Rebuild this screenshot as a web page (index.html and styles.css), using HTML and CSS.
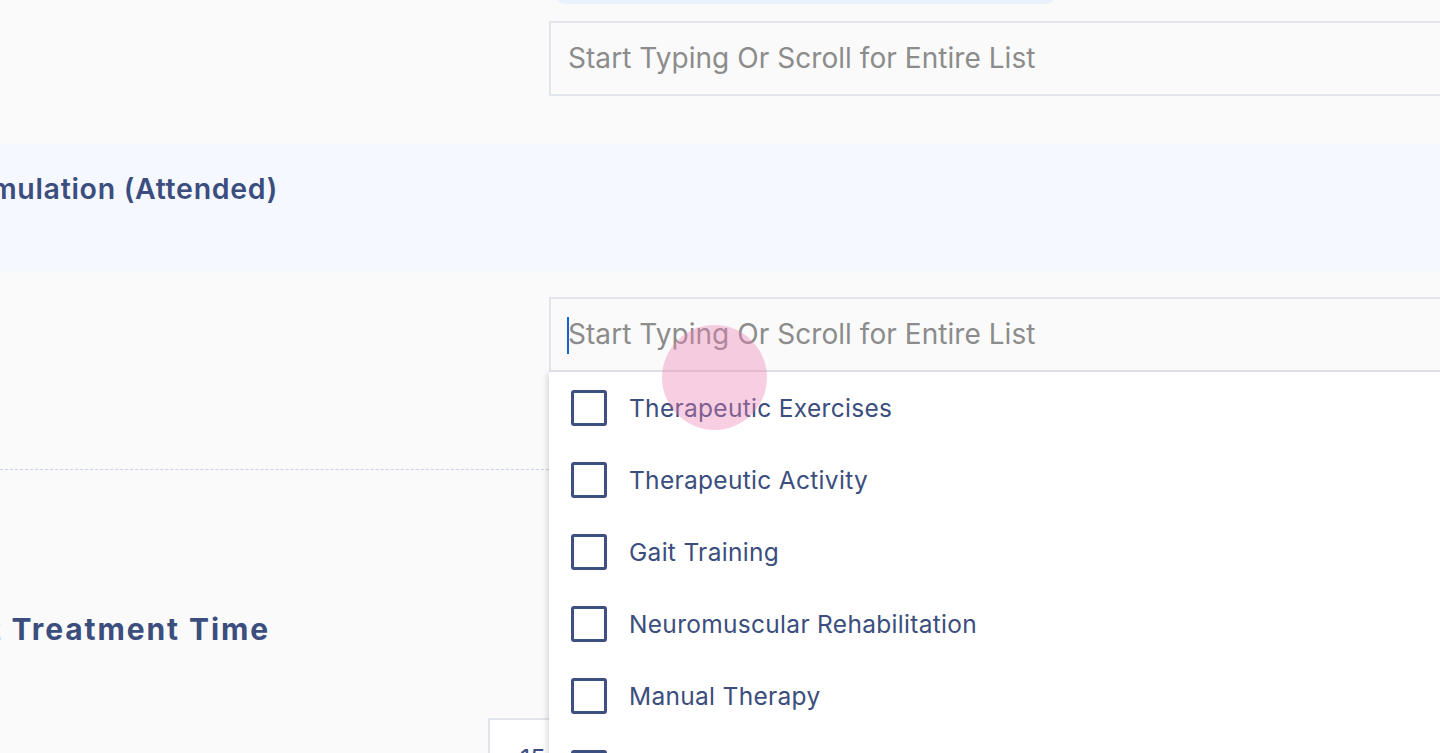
FILE: index.html
```html
<!DOCTYPE html>
<html>
<head>
<meta charset="utf-8">
<link rel="stylesheet" href="styles.css">
</head>
<body>
<div class="page">
  <div class="pill-row"><div class="pill"></div></div>
  <div class="field-row">
    <div class="field"><span class="placeholder">Start Typing Or Scroll for Entire List</span></div>
  </div>
  <div class="band">
    <div class="clip-title"><span class="title">Electrical Stimulation (Attended)</span></div>
  </div>
  <div class="field-row second">
    <div class="field"><span class="caret"></span><span class="placeholder">Start Typing Or Scroll for Entire List</span></div>
  </div>
  <div class="divider-row"><div class="divider"></div></div>
  <div class="treat-row">
    <div class="clip-title treat"><span class="title bold">Total Direct Treatment Time</span></div>
  </div>
  <div class="box-row"><div class="small-box"><span class="box-text">15</span></div></div>

  <div class="dropdown">
    <div class="item"><span class="cb"></span><span class="label">Therapeutic Exercises</span></div>
    <div class="item"><span class="cb"></span><span class="label">Therapeutic Activity</span></div>
    <div class="item"><span class="cb"></span><span class="label">Gait Training</span></div>
    <div class="item"><span class="cb"></span><span class="label">Neuromuscular Rehabilitation</span></div>
    <div class="item"><span class="cb"></span><span class="label">Manual Therapy</span></div>
    <div class="item"><span class="cb"></span><span class="label">Massage</span></div>
  </div>
  <div class="touch"></div>
</div>
</body>
</html>
```
FILE: styles.css
```css
html, body {
  margin: 0;
  padding: 0;
  background: #fafafa;
  overflow: hidden;
  width: 1440px;
  height: 753px;
}
.page {
  position: relative;
  width: 1440px;
  height: 753px;
  overflow: hidden;
  display: flex;
  flex-direction: column;
  font-family: "Inter", "Open Sans", sans-serif;
  color: #3b4e7e;
}
.pill-row {
  height: 21px;
  flex: none;
}
.pill {
  margin-left: 552px;
  margin-top: -26px;
  width: 507px;
  height: 30px;
  background: #ebf0fd;
  border-radius: 15px;
}
.field-row {
  flex: none;
  padding-left: 549px;
  height: 75px;
}
.field-row.second {
  margin-top: 26px;
}
.field {
  box-sizing: border-box;
  width: 1000px;
  height: 75px;
  border: 2px solid #e1e4ea;
  border-right: none;
  background: #fafafa;
  display: flex;
  align-items: center;
  padding-left: 17px;
  position: relative;
}
.placeholder {
  font-size: 28px;
  color: #8c8c8c;
  letter-spacing: 0.05px;
  white-space: nowrap;
  margin-top: -2px;
}
.caret {
  position: absolute;
  left: 16px;
  top: 18px;
  width: 2px;
  height: 37px;
  background: #1a5fd0;
}
.band {
  flex: none;
  margin-top: 48px;
  height: 127px;
  background: #f5f8fe;
  display: flex;
  align-items: center;
}
.clip-title {
  width: 278px;
  overflow: hidden;
  display: flex;
  justify-content: flex-end;
  white-space: nowrap;
  margin-top: -38px;
}
.title {
  font-size: 28.5px;
  letter-spacing: 0.7px;
  font-weight: 600;
  color: #3b4e7e;
  flex: none;
}
.title.bold {
  font-weight: 700;
  font-size: 30px;
  letter-spacing: 1.9px;
}
.divider-row {
  flex: none;
  height: 97px;
  display: flex;
  align-items: flex-end;
}
.divider {
  width: 549px;
  height: 0;
  border-top: 1px dashed #c9d2e8;
  margin-bottom: -1px;
}
.treat-row {
  flex: none;
  margin-top: 140px;
  height: 40px;
  display: flex;
  align-items: center;
}
.treat {
  width: 270px;
  margin-top: 0;
}
.box-row {
  flex: none;
  margin-top: 69px;
  padding-left: 488px;
}
.small-box {
  box-sizing: border-box;
  width: 120px;
  height: 80px;
  border: 2px solid #e1e4ea;
  background: #ffffff;
  padding: 24px 0 0 30px;
}
.box-text {
  font-size: 25px;
  color: #3b4e7e;
}
.dropdown {
  position: absolute;
  left: 549px;
  top: 372px;
  width: 1000px;
  height: 420px;
  background: #ffffff;
  box-shadow: -2px 2px 6px rgba(0, 0, 0, 0.14);
  display: flex;
  flex-direction: column;
}
.item {
  height: 72px;
  flex: none;
  display: flex;
  align-items: center;
  padding-left: 22px;
}
.cb {
  box-sizing: border-box;
  width: 36px;
  height: 36px;
  border: 3px solid #3d5082;
  border-radius: 3px;
  margin-right: 22px;
  flex: none;
}
.label {
  font-size: 24.5px;
  letter-spacing: 0.3px;
  color: #3b4e7e;
  white-space: nowrap;
}
.touch {
  position: absolute;
  left: 662px;
  top: 325px;
  width: 105px;
  height: 105px;
  border-radius: 50%;
  background: rgba(236, 130, 180, 0.38);
}
```
